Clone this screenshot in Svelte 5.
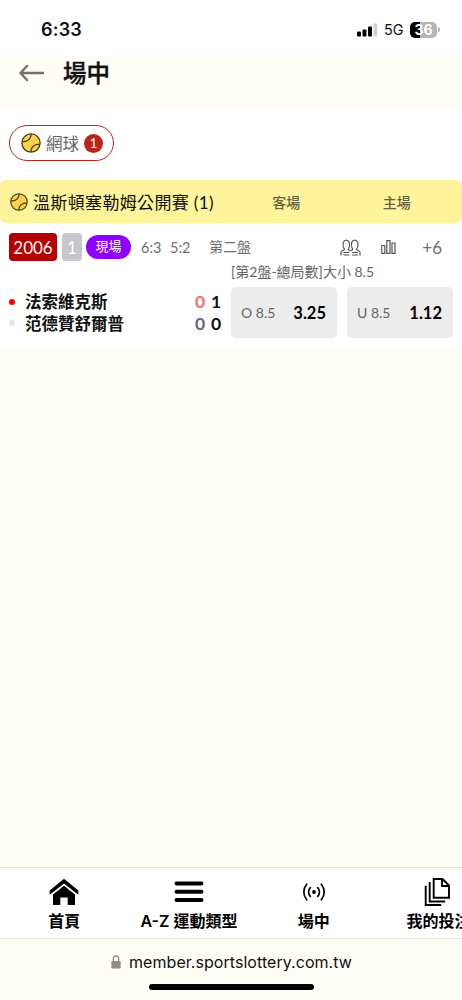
<script>
  const league = { name: "溫斯頓塞勒姆公開賽", count: 1 };

  const match = {
    code: "2006",
    single: 1,
    sets: ["6:3", "5:2"],
    period: "第二盤",
    more: 6,
    market: "[第2盤-總局數]大小 8.5",
  };

  let players = [
    { name: "法索維克斯", serving: true, points: 0, games: 1 },
    { name: "范德贊舒爾普", serving: false, points: 0, games: 0 },
  ];

  let odds = [
    { label: "O 8.5", price: "3.25" },
    { label: "U 8.5", price: "1.12" },
  ];
</script>

{#snippet ball(size)}
  <svg class="ball" width={size} height={size} viewBox="0 0 20 20">
    <circle cx="10" cy="10" r="9.1" />
    <path d="M1.200 8.500C3.200 9 4.500 8.800 6.200 7.800 8.600 6.500 10.200 4.500 10 1" />
    <path d="M18.800 11.500C16.800 11 15.500 11.200 13.800 12.200 11.400 13.500 9.800 15.500 10 19" />
  </svg>
{/snippet}

<div class="screen">
  <div class="status">
    <span class="time">6:33</span>
    <svg class="signal" width="21" height="14" viewBox="0 0 21 14">
      <rect x="0" y="8.500" width="4" height="5" rx="1" />
      <rect x="5.500" y="6.500" width="4" height="7" rx="1" />
      <rect x="11" y="3.500" width="4" height="10" rx="1" />
      <rect class="off" x="16.600" y="0.500" width="3.600" height="13" rx="1" />
    </svg>
    <span class="net">5G</span>
    <span class="battery">36</span>
    <span class="tip"></span>
  </div>

  <header>
    <svg width="26" height="18" viewBox="0 0 26 18">
      <path d="M24 9H1.500M8 2L1.500 9l6.500 7" />
    </svg>
    <h1>場中</h1>
  </header>

  <main>
    <button class="chip">
      {@render ball(20)}
      <span>網球</span>
      <b>1</b>
    </button>

    <div class="league">
      {@render ball(18)}
      <span class="name">{league.name} ({league.count})</span>
      <span class="side">客場</span>
      <span class="side">主場</span>
    </div>

    <section class="match">
      <div class="info">
        <span class="code">{match.code}</span>
        <span class="single">{match.single}</span>
        <span class="live">現場</span>
        {#each match.sets as set}
          <span class="set">{set}</span>
        {/each}
        <span class="period">{match.period}</span>
        <svg class="people" width="21" height="17" viewBox="0 0 21 17">
          <path d="M1 16.500V13c0-1.200 2.800-1.600 3.300-2.300.4-.6-.5-1.300-.9-2.500C2.500 4.500 3.300 1.200 6.300 1.200s3.800 3.300 2.900 7c-.3 1.100-1.200 1.900-.8 2.500.4.500 1.200.7 2 1" />
          <path d="M20 16.500V13c0-1.200-2.800-1.600-3.300-2.300-.4-.6.5-1.300.9-2.500.9-3.700.1-7-2.900-7s-3.800 3.300-2.900 7c.3 1.100 1.200 1.900.8 2.500-.4.500-1.400.7-2.100 1.100" />
          <path d="M3.500 13.500h6M3.500 16h6M12 13.500h6M12 16h6" />
        </svg>
        <svg class="stats" width="15" height="14" viewBox="0 0 15 14">
          <path d="M.8 5.500h3v7.800h-3zM5.800 .700h3.200v12.600H5.800zM11 3h3v10.300h-3z" />
        </svg>
        <span class="more">+{match.more}</span>
      </div>

      <div class="body">
        <div class="players">
          {#each players as player}
            <div class="player">
              <i class:serving={player.serving}></i>
              <span class="who">{player.name}</span>
              <span class="points" class:hot={player.serving}>{player.points}</span>
              <span class="games">{player.games}</span>
            </div>
          {/each}
        </div>
        <div class="market">
          <div class="title">{match.market}</div>
          <div class="odds">
            {#each odds as odd}
              <button class="odd"><span>{odd.label}</span><strong>{odd.price}</strong></button>
            {/each}
          </div>
        </div>
      </div>
    </section>
  </main>

  <nav>
    <a href="#home">
      <svg width="30" height="28" viewBox="0 0 30 28">
        <path d="M15 .800L.700 12.600v4.200L15 5.600l14.300 11.200v-4.200z" />
        <path d="M15 7.800L4 16.600V27h7.300v-7.500h7.400V27H26V16.600z" />
      </svg>
      首頁
    </a>
    <a href="#sports">
      <svg width="30" height="28" viewBox="0 0 30 28">
        <path class="bars" d="M2.500 5.500h25M2.500 13.700h25M2.500 21.900h25" />
      </svg>
      A-Z 運動類型
    </a>
    <a href="#live">
      <svg width="30" height="28" viewBox="0 0 30 28">
        <circle cx="15" cy="14" r="1.900" />
        <path class="wave" d="M11.300 9.700a6.200 6.200 0 0 0 0 8.600M18.700 9.700a6.200 6.200 0 0 1 0 8.600M7.700 6.200a12 12 0 0 0 0 15.600M22.300 6.200a12 12 0 0 1 0 15.600" />
      </svg>
      場中
    </a>
    <a href="#bets">
      <svg width="30" height="28" viewBox="0 0 30 28">
        <path class="page" d="M10.700 1h8.800l6.500 6.500v12.300H10.700zM19 1v7h7M6.700 4v19.500h15.500M2.700 7.800v19.200h15.500" />
      </svg>
      我的投注
    </a>
  </nav>

  <footer>
    <div class="url">
      <svg width="10" height="14" viewBox="0 0 10 14">
        <rect x="0.300" y="6" width="9.400" height="7.500" rx="1.300" />
        <path d="M2.300 7V3.900a2.700 2.900 0 0 1 5.400 0V7" />
      </svg>
      member.sportslottery.com.tw
    </div>
    <div class="handle"></div>
  </footer>
</div>

<style>
  :global(body) { background: #fffdf5; }
  .screen { width: 462px; height: 1000px; display: flex; flex-direction: column; overflow: hidden; font-family: Lato, "Noto Sans CJK TC", sans-serif; color: #111; background: #fffdf5; }
  .screen * { box-sizing: border-box; }
  button { border: 0; margin: 0; padding: 0; font: inherit; color: inherit; }
  svg { flex: none; display: block; }

  .status { height: 56px; flex: none; display: flex; align-items: center; padding: 3px 22px 0 41px; background: #fff; font-family: Inter, sans-serif; }
  .time { font-size: 18px; font-weight: 600; letter-spacing: 0.2px; margin-right: auto; }
  .signal .off { fill: #d0d0d0; }
  .net { font-size: 14.500px; margin-left: 6px; width: 20px; white-space: nowrap; }
  .battery { width: 27px; height: 16px; margin-left: 6px; border-radius: 5px; background: linear-gradient(90deg, #000 36%, #b5b5b5 36%); color: #fff; font-size: 14px; font-weight: 700; line-height: 16px; text-align: center; }
  .tip { width: 2px; height: 5px; margin-left: 1px; border-radius: 0 2px 2px 0; background: #b5b5b5; }

  header { height: 51px; flex: none; display: flex; align-items: flex-start; padding: 8px 19px 0; gap: 18px; }
  header svg { fill: none; stroke: #707070; stroke-width: 2.500; stroke-linecap: round; stroke-linejoin: round; }
  h1 { margin: 0; font-size: 23.500px; line-height: 19px; font-weight: 500; -webkit-text-stroke: 0.400px; }

  main { height: 241px; flex: none; background: #fff; padding-top: 18px; }
  .ball circle { fill: #ffd24d; }
  .ball circle, .ball path { stroke: #473d18; stroke-width: 1.300; }
  .ball path { fill: none; }
  .chip { display: flex; align-items: center; width: 105px; height: 36px; margin-left: 9px; padding-left: 11px; border: 1.500px solid #c5221f; border-radius: 18px; background: #fff; color: #666; font-size: 16.500px; }
  .chip span { margin-left: 5px; }
  .chip b { width: 19px; height: 19px; margin-left: 5px; border-radius: 50%; background: #b9251c; color: #fff; font-size: 13px; font-weight: 400; line-height: 19px; text-align: center; }

  .league { height: 43px; margin-top: 19px; padding: 0 10px; display: flex; align-items: center; border-radius: 6px; background: #fff49b; }
  .league .name { width: 203px; padding-left: 5px; font-size: 17px; letter-spacing: 0.350px; white-space: nowrap; }
  .side { width: 110.500px; text-align: center; font-size: 14px; font-weight: 500; color: #666241; }

  .info { display: flex; align-items: center; height: 28px; margin: 10px 9px 0; color: #707070; font-size: 14.500px; white-space: nowrap; }
  .info span { text-align: center; }
  .info .code, .info .single { height: 28px; line-height: 29px; border-radius: 4px; color: #fff; font-size: 17px; }
  .code { width: 48px; background: #b60000; }
  .single { width: 20px; margin-left: 5px; background: #c7c6cd; }
  .info .live { width: 45px; height: 24px; margin: 0 5px 0 4px; border-radius: 12px; background: #9000ff; color: #fff; font-size: 13px; line-height: 23px; }
  .set { width: 19px; margin: 0 5px; }
  .info .period { width: 42px; margin: -2px 0 0 15px; font-size: 14px; }
  .people { margin: 1px 0 0 89px; }
  .stats { margin-left: 20px; }
  .people, .stats { fill: none; stroke: #555; stroke-width: 1.200; }
  .info .more { margin-left: auto; margin-right: 11px; font-size: 17px; }

  .body { display: flex; }
  .players { width: 231px; padding: 30px 8px 0 9px; }
  .player { display: flex; align-items: center; height: 21.500px; font-size: 16.500px; line-height: 21px; }
  .player i { flex: none; width: 6px; height: 6px; border-radius: 50%; background: #e5e4e9; }
  .player i.serving { background: #f00; }
  .who { flex: none; width: 174px; margin-top: 2px; padding-left: 10px; font-weight: 700; white-space: nowrap; }
  .points, .games { font-size: 17.500px; font-weight: 700; }
  .points { flex: none; width: 22px; text-align: center; color: #68658f; }
  .points.hot { color: #ff6b6b; }
  .games { width: 11px; }
  .title { height: 26px; line-height: 21px; color: #666; font-size: 14px; white-space: nowrap; }
  .odds { display: flex; gap: 10px; }
  .odd { width: 106px; height: 51px; padding: 0 11px 0 10px; display: flex; justify-content: space-between; align-items: center; border-radius: 5px; background: #ececec; }
  .odd span { font-size: 14px; color: #666; }
  .odd strong { font-size: 16.500px; color: #000; }

  nav { height: 72px; flex: none; margin-top: auto; display: flex; border: 1px solid #e3e3e3; border-width: 1px 0; background: #fff; padding: 10px 0 0 2px; }
  nav a { width: 124.700px; flex: none; display: flex; flex-direction: column; align-items: center; gap: 3px; color: #000; text-decoration: none; font-family: Inter, "Noto Sans CJK TC", sans-serif; font-size: 16px; line-height: 24px; font-weight: 600; white-space: nowrap; }
  .bars, .wave, .page { fill: none; stroke: #000; }
  .bars { stroke-width: 4; stroke-linecap: round; }
  .wave { stroke-width: 1.700; stroke-linecap: round; }
  .page { stroke-width: 1.900; }

  footer { height: 61px; flex: none; display: flex; flex-direction: column; align-items: center; background: #fffdf5; }
  .url { height: 45px; display: flex; align-items: center; gap: 8px; margin-left: 1px; font: 16px Inter, sans-serif; letter-spacing: 0.050px; }
  .url svg { fill: #8d8d8d; }
  .url path { fill: none; stroke: #8d8d8d; stroke-width: 1.300; }
  .handle { width: 165px; height: 6px; border-radius: 3px; background: #000; }
</style>
